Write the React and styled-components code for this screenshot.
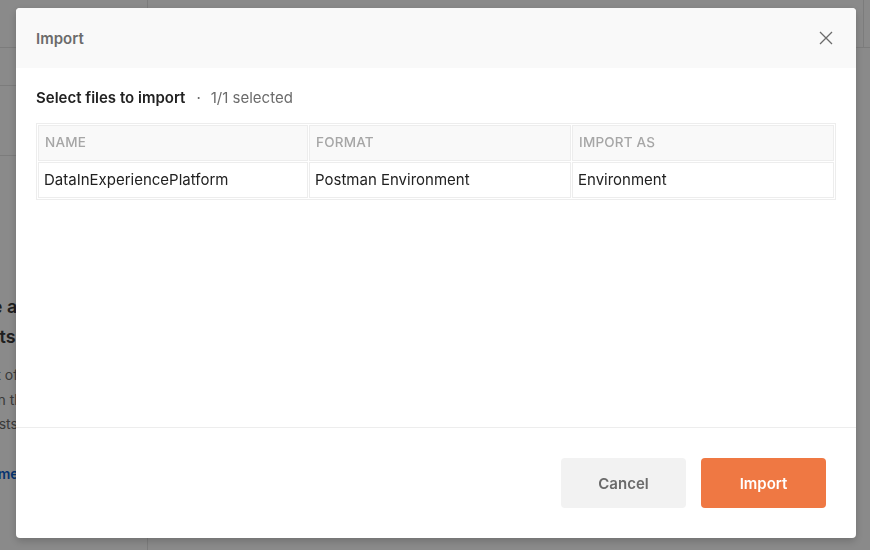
import React from "react";
import styled, { createGlobalStyle } from "styled-components";

const Global = createGlobalStyle`
  html, body { margin: 0; padding: 0; }
  body {
    width: 870px; height: 550px; overflow: hidden; background: #ffffff;
    font-family: Inter, "Noto Sans", "Liberation Sans", sans-serif;
  }
  * { box-sizing: border-box; }
`;

const AppShell = styled.div`
  display: flex;
  width: 870px;
  height: 550px;
  overflow: hidden;
`;

const Sidebar = styled.aside`
  width: 148px;
  flex: none;
  border-right: 1px solid #e6e6e6;
  display: flex;
  flex-direction: column;
  overflow: hidden;
`;

const SideBar = styled.div`
  height: ${(p) => p.$h}px;
  flex: none;
  border-bottom: 1px solid #e6e6e6;
`;

const EmptyState = styled.div`
  margin: 136px 0 0 -105px;
  width: 260px;
  display: flex;
  flex-direction: column;
  white-space: nowrap;
`;

const EmptyTitle = styled.div`
  width: 170px;
  margin-left: -24px;
  text-align: center;
  font-size: 18px;
  font-weight: 600;
  line-height: 30px;
  color: #3a3a3a;
`;

const EmptyText = styled.div`
  margin: 11px 0 0 -49px;
  font-size: 14px;
  line-height: 24.5px;
  color: #6b6b6b;
`;

const EmptyLink = styled.div`
  margin: 28px 0 0 3px;
  font-size: 14px;
  line-height: 17px;
  font-weight: 600;
  color: #0b5fd0;
`;

const Main = styled.main`
  flex: 1;
  display: flex;
  flex-direction: column;
`;

const TopBar = styled.div`
  height: 48px;
  border-bottom: 1px solid #e6e6e6;
  display: flex;
  justify-content: flex-end;
`;

const TopTab = styled.div`
  width: 7px;
  border-left: 1px solid #e6e6e6;
`;

const Overlay = styled.div`
  position: fixed;
  inset: 0;
  background: rgba(0, 0, 0, 0.46);
  display: flex;
  align-items: flex-start;
  padding: 8px 0 0 16px;
`;

const Modal = styled.div`
  width: 840px;
  height: 530px;
  background: #ffffff;
  border-radius: 4px;
  box-shadow: 0 3px 8px rgba(0, 0, 0, 0.2);
  display: flex;
  flex-direction: column;
  overflow: hidden;
`;

const Header = styled.div`
  height: 60px;
  flex: none;
  background: #f9f9f9;
  display: flex;
  align-items: center;
  justify-content: space-between;
  padding: 0 19px 0 20px;
`;

const Title = styled.div`
  font-size: 15px;
  font-weight: 600;
  color: #6b6b6b;
`;

const CloseButton = styled.button`
  width: 22px;
  height: 22px;
  border: none;
  background: transparent;
  padding: 0;
  display: flex;
  align-items: center;
  justify-content: center;
  color: #6b6b6b;
`;

const Body = styled.div`
  flex: 1;
  padding: 20px 20px 0 20px;
  border-bottom: 1px solid #ededed;
`;

const Summary = styled.div`
  font-size: 15px;
  line-height: 20px;
  color: #212121;
  display: flex;
  align-items: center;
`;

const Strong = styled.span`
  font-weight: 600;
`;

const Dot = styled.span`
  color: #6b6b6b;
  margin: 0 10px 0 11px;
`;

const Muted = styled.span`
  color: #6b6b6b;
`;

const Table = styled.table`
  margin-top: 15px;
  width: 800px;
  table-layout: fixed;
  border: 1px solid #ededed;
  border-spacing: 1px;
`;

const Th = styled.th`
  height: 36px;
  background: #f9f9f9;
  border: 1px solid #ededed;
  text-align: left;
  padding: 0 6px 2px;
  font-size: 13.5px;
  font-weight: 500;
  color: #a6a6a6;
  text-transform: uppercase;
  letter-spacing: 0.2px;
`;

const Td = styled.td`
  height: 36px;
  border: 1px solid #ededed;
  padding: 0 5px 1px;
  font-size: 15px;
  color: #212121;
`;

const Footer = styled.div`
  height: 110px;
  flex: none;
  display: flex;
  justify-content: flex-end;
  align-items: center;
  gap: 15px;
  padding: 0 30px 0 0;
`;

const Button = styled.button`
  width: 125px;
  height: 50px;
  border: none;
  border-radius: 4px;
  font-family: inherit;
  font-size: 15px;
  font-weight: 600;
  background: ${(p) => (p.$primary ? "#ef7843" : "#f2f2f2")};
  color: ${(p) => (p.$primary ? "#ffffff" : "#6b6b6b")};
`;

const columns = [
  { label: "Name", width: 270 },
  { label: "Format", width: 262 },
  { label: "Import as", width: 262 },
];

const rows = [["DataInExperiencePlatform", "Postman Environment", "Environment"]];

export default function App() {
  return (
    <>
      <Global />
      <AppShell>
        <Sidebar>
          <SideBar $h={48} />
          <SideBar $h={38} />
          <SideBar $h={70} />
          <EmptyState>
            <EmptyTitle>
              You don't have any
              <br />
              environments
            </EmptyTitle>
            <EmptyText>
              An environment is a set of
              <br />
              variables you can use in the
              <br />
              context of all the requests.
            </EmptyText>
            <EmptyLink>Create Environment</EmptyLink>
          </EmptyState>
        </Sidebar>
        <Main>
          <TopBar>
            <TopTab />
          </TopBar>
        </Main>
      </AppShell>
      <Overlay>
        <Modal>
          <Header>
            <Title>Import</Title>
            <CloseButton aria-label="Close">
              <svg width="16" height="16" viewBox="0 0 16 16" fill="none" stroke="currentColor" strokeWidth="1.3">
                <path d="M2 2 L14 14 M14 2 L2 14" />
              </svg>
            </CloseButton>
          </Header>
          <Body>
            <Summary>
              <Strong>Select files to import</Strong>
              <Dot>·</Dot>
              <Muted>1/1 selected</Muted>
            </Summary>
            <Table>
              <colgroup>
                {columns.map((c) => (
                  <col key={c.label} style={{ width: c.width }} />
                ))}
              </colgroup>
              <thead>
                <tr>
                  {columns.map((c) => (
                    <Th key={c.label}>{c.label}</Th>
                  ))}
                </tr>
              </thead>
              <tbody>
                {rows.map((r, i) => (
                  <tr key={i}>
                    {r.map((v, j) => (
                      <Td key={j}>{v}</Td>
                    ))}
                  </tr>
                ))}
              </tbody>
            </Table>
          </Body>
          <Footer>
            <Button>Cancel</Button>
            <Button $primary>Import</Button>
          </Footer>
        </Modal>
      </Overlay>
    </>
  );
}
